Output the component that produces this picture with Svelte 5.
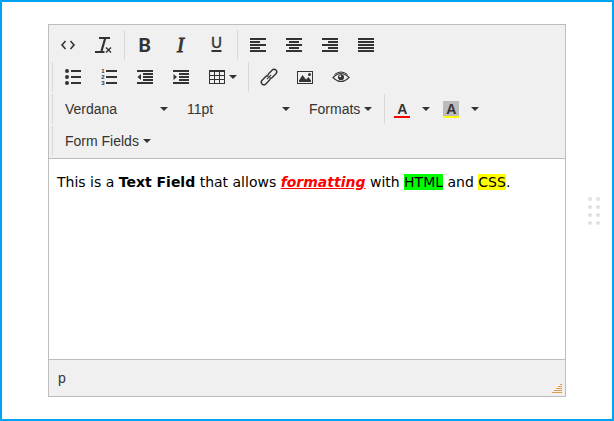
<script>
  let font = $state('Verdana');
  let size = $state('11pt');

  const align = [
    { name: 'Align left', x: 0 },
    { name: 'Align center', x: 3 },
    { name: 'Align right', x: 6 },
    { name: 'Justify', x: 0, full: true }
  ];
  const rows = [1, 4, 7, 10, 13];
</script>

{#snippet caret()}
  <svg class="caret" viewBox="0 0 8 4" aria-hidden="true"><path d="M0 0h8L4 4z" /></svg>
{/snippet}

<main class="field">
  <div class="editor">
    <div class="toolbar" role="toolbar" aria-label="Formatting">
      <div class="group">
        <button type="button" class="tool" aria-label="Source code">
          <svg class="icon line" viewBox="0 0 16 16"><path d="M5.500 4L2 8L5.500 12M10.500 4L14 8L10.500 12" stroke-width="1.6" /></svg>
        </button>
        <button type="button" class="tool" aria-label="Clear formatting">
          <svg class="icon line" viewBox="0 0 16 16">
            <path d="M3 1H14M-1 15H8.500" stroke-width="2" />
            <path d="M9.300 1L5.500 14" stroke-width="2.200" />
            <path d="M10 10.400L15 15.400M15 10.400L10 15.400" stroke-width="1.400" />
          </svg>
        </button>
      </div>

      <div class="group">
        <button type="button" class="tool" aria-label="Bold">
          <svg class="icon" viewBox="0 0 16 16"><text class="bold" x="7.500" y="15" text-anchor="middle">B</text></svg>
        </button>
        <button type="button" class="tool" aria-label="Italic">
          <svg class="icon" viewBox="0 0 16 16"><text class="italic" x="7.500" y="15" text-anchor="middle">I</text></svg>
        </button>
        <button type="button" class="tool" aria-label="Underline">
          <svg class="icon" viewBox="0 0 16 16">
            <text class="under" x="7.500" y="11" text-anchor="middle">U</text>
            <path d="M2.500 13h10v2h-10z" />
          </svg>
        </button>
      </div>

      <div class="group">
        {#each align as a}
          <button type="button" class="tool" aria-label={a.name}>
            <svg class="icon" viewBox="0 0 16 16">
              {#each rows as y, i}
                {#if i % 2 === 0 || a.full}
                  <rect x="0" {y} width="16" height="2" />
                {:else}
                  <rect x={a.x} {y} width="10" height="2" />
                {/if}
              {/each}
            </svg>
          </button>
        {/each}
      </div>

      <div class="group">
        <button type="button" class="tool" aria-label="Bullet list">
          <svg class="icon" viewBox="0 0 16 16">
            {#each [2, 8, 14] as y}
              <circle cx="2" cy={y} r="2" />
              <rect x="6" y={y - 1} width="10" height="2" />
            {/each}
          </svg>
        </button>
        <button type="button" class="tool" aria-label="Numbered list">
          <svg class="icon" viewBox="0 0 16 16">
            {#each [2, 8, 14] as y, i}
              <text class="digit" x="2" y={y + 2} text-anchor="middle">{i + 1}</text>
              <rect x="5" y={y - 1} width="11" height="2" />
            {/each}
          </svg>
        </button>
        <button type="button" class="tool" aria-label="Decrease indent">
          <svg class="icon" viewBox="0 0 16 16">
            <path d="M0 1h16v2H0zM6 4h10v2H6zM6 7h10v2H6zM6 10h10v2H6zM0 13h16v2H0zM4 5v6L0.500 8z" />
          </svg>
        </button>
        <button type="button" class="tool" aria-label="Increase indent">
          <svg class="icon" viewBox="0 0 16 16">
            <path d="M0 1h16v2H0zM6 4h10v2H6zM6 7h10v2H6zM6 10h10v2H6zM0 13h16v2H0zM0.500 5v6L4 8z" />
          </svg>
        </button>
        <button type="button" class="tool drop" aria-label="Table" aria-haspopup="true">
          <svg class="icon" viewBox="0 0 16 16">
            <path fill-rule="evenodd" d="M0 1h16v14H0zM1 3v3h4V3zM6 3v3h4V3zM11 3v3h4V3zM1 7v3h4V7zM6 7v3h4V7zM11 7v3h4V7zM1 11v3h4v-3zM6 11v3h4v-3zM11 11v3h4v-3z" />
          </svg>
          {@render caret()}
        </button>
      </div>

      <div class="group">
        <button type="button" class="tool" aria-label="Insert link">
          <svg class="icon line" viewBox="0 0 16 16">
            <g transform="rotate(-45 8 8)" stroke-width="1.400">
              <path d="M8.500 8.800A2.600 2.600 0 0 1 6 10.600H0.800a2.600 2.600 0 0 1 0-5.200H6A2.600 2.600 0 0 1 7.700 6" />
              <path d="M7.500 7.200A2.600 2.600 0 0 1 10 5.400H15.200a2.600 2.600 0 0 1 0 5.200H10A2.600 2.600 0 0 1 8.300 10" />
              <path d="M5 8H11" stroke-width="1" />
            </g>
          </svg>
        </button>
        <button type="button" class="tool" aria-label="Insert image">
          <svg class="icon" viewBox="0 0 16 16">
            <path fill-rule="evenodd" d="M0 2h16v13H0zM1 3v11h14V3z" />
            <path d="M2 13V11.500L5.500 6L9 10.500L11.500 8L14 11.500V13z" />
            <circle cx="12.500" cy="5.500" r="1.500" />
          </svg>
        </button>
        <button type="button" class="tool" aria-label="Preview">
          <svg class="icon line" viewBox="0 0 16 16">
            <path d="M0 8.500Q8 0.500 16 8.500Q8 16.500 0 8.500z" stroke-width="1.100" />
            <path d="M1.500 5.500Q8 0.500 14.500 5.500" stroke-width="1" />
            <circle cx="8" cy="8.300" r="3" fill="#333" stroke="none" />
            <circle cx="7.200" cy="7.200" r="1" fill="#f0f0f0" stroke="none" />
          </svg>
        </button>
      </div>

      <div class="group">
        <label class="pick">
          <select aria-label="Font family" bind:value={font}>
            <option>Verdana</option>
            <option>Arial</option>
            <option>Georgia</option>
          </select>
          {@render caret()}
        </label>
        <label class="pick">
          <select aria-label="Font size" bind:value={size}>
            <option>8pt</option>
            <option>11pt</option>
            <option>14pt</option>
          </select>
          {@render caret()}
        </label>
        <button type="button" class="menu" aria-haspopup="true">Formats{@render caret()}</button>
      </div>

      <div class="group">
        <button type="button" class="tool color" aria-label="Text color">
          <span class="swatch fore">A</span>{@render caret()}
        </button>
        <button type="button" class="tool color" aria-label="Background color">
          <span class="swatch back">A</span>{@render caret()}
        </button>
      </div>

      <div class="group">
        <button type="button" class="menu" aria-haspopup="true">Form Fields{@render caret()}</button>
      </div>
    </div>

    <div class="content" contenteditable="true" role="textbox" aria-multiline="true" aria-label="Rich text" tabindex="0" spellcheck="false">
      <p>This is a <strong>Text Field</strong> that allows <strong class="fancy"><em>formatting</em></strong> with <span class="green">HTML</span> and <span class="yellow">CSS</span>.</p>
    </div>

    <div class="status">
      <span>p</span>
      <svg class="grip" viewBox="0 0 10 9" aria-hidden="true">
        {#each [0, 1, 2, 3, 4] as n}
          <path d="M{8 - 2 * n} {n * 2 + 0.5}H10" />
          <path class="blue" d="M{9 - 2 * n} {n * 2 + 0.5}H10" />
        {/each}
      </svg>
    </div>
  </div>

  <div class="handle" aria-hidden="true">
    {#each Array(8) as _}<i></i>{/each}
  </div>
</main>

<style>
  :global(body) {
    background: #fff;
  }

  .field {
    position: relative;
    box-sizing: border-box;
    min-height: 100vh;
    padding: 22px 46px;
    border: 2px solid #00a2f4;
    color: #333;
    font: 14px/20px "Liberation Sans", Arial, sans-serif;
  }

  .editor {
    border: 1px solid #bdbdbd;
    background: #fff;
  }

  .toolbar {
    display: flex;
    flex-wrap: wrap;
    row-gap: 2px;
    padding: 5px 0 2px 1px;
    border-bottom: 1px solid #bdbdbd;
    background: #f0f0f0;
  }

  .group {
    display: flex;
    height: 30px;
  }

  .group + .group {
    margin-left: 2px;
    padding-left: 2px;
    border-left: 1px solid #d9d9d9;
  }

  button {
    display: flex;
    align-items: center;
    margin: 0;
    padding: 0 10px;
    border: 0;
    background: none;
    color: inherit;
    font: inherit;
    cursor: pointer;
  }

  .menu {
    gap: 4px;
  }

  .drop {
    gap: 4px;
    padding-right: 9px;
  }

  .color {
    gap: 12px;
    padding: 0 6px 0 7px;
  }

  button:hover,
  .pick:hover {
    background: #e3e3e3;
  }

  .icon {
    width: 16px;
    height: 16px;
    overflow: visible;
    fill: #333;
  }

  .line {
    fill: none;
    stroke: #333;
  }

  .caret {
    width: 8px;
    height: 4px;
    fill: #333;
  }

  .bold {
    font: 900 19px Lato, sans-serif;
  }

  .italic {
    font: italic 21px "Liberation Serif", serif;
    stroke: #333;
    stroke-width: 0.8px;
  }

  .under {
    font: 15px Lato, sans-serif;
    stroke: #333;
    stroke-width: 0.4px;
  }

  .digit {
    font: bold 6px "Liberation Sans", sans-serif;
  }

  .pick {
    position: relative;
    display: flex;
    width: 122px;
  }

  .pick select {
    width: 100%;
    padding: 0 24px 0 10px;
    border: 0;
    appearance: none;
    background: none;
    color: inherit;
    font: inherit;
    cursor: pointer;
  }

  .pick .caret {
    position: absolute;
    top: 13px;
    right: 9px;
    pointer-events: none;
  }

  .swatch {
    box-sizing: border-box;
    width: 16px;
    height: 17px;
    border-bottom: 2px solid;
    font-weight: bold;
    line-height: 16px;
    text-align: center;
  }

  .fore {
    border-color: #f00;
  }

  .back {
    border-color: #ff0;
    background: #bbb;
  }

  .content {
    min-height: 184px;
    padding: 8px;
    outline: 0;
    color: #000;
    font: 14px/17px Verdana, "DejaVu Sans", sans-serif;
  }

  .content p {
    margin: 7px 0;
  }

  .fancy {
    color: #f00;
    text-decoration: underline;
  }

  .green {
    background: #0f0;
  }

  .yellow {
    background: #ff0;
  }

  .status {
    display: flex;
    align-items: center;
    justify-content: space-between;
    padding: 8px 3px 8px 9px;
    border-top: 1px solid #bdbdbd;
    background: #f0f0f0;
  }

  .grip {
    align-self: flex-end;
    width: 10px;
    height: 9px;
    margin-bottom: -5px;
    stroke: #e3a55c;
    cursor: nwse-resize;
  }

  .grip .blue {
    stroke: #8ba0b5;
    stroke-dasharray: 1 1;
  }

  .handle {
    position: absolute;
    top: 50%;
    right: 12px;
    display: grid;
    grid-template-columns: 4px 4px;
    gap: 4px;
    transform: translateY(-50%);
  }

  .handle i {
    width: 4px;
    height: 4px;
    border-radius: 2px;
    background: #e2e2e2;
  }
</style>
